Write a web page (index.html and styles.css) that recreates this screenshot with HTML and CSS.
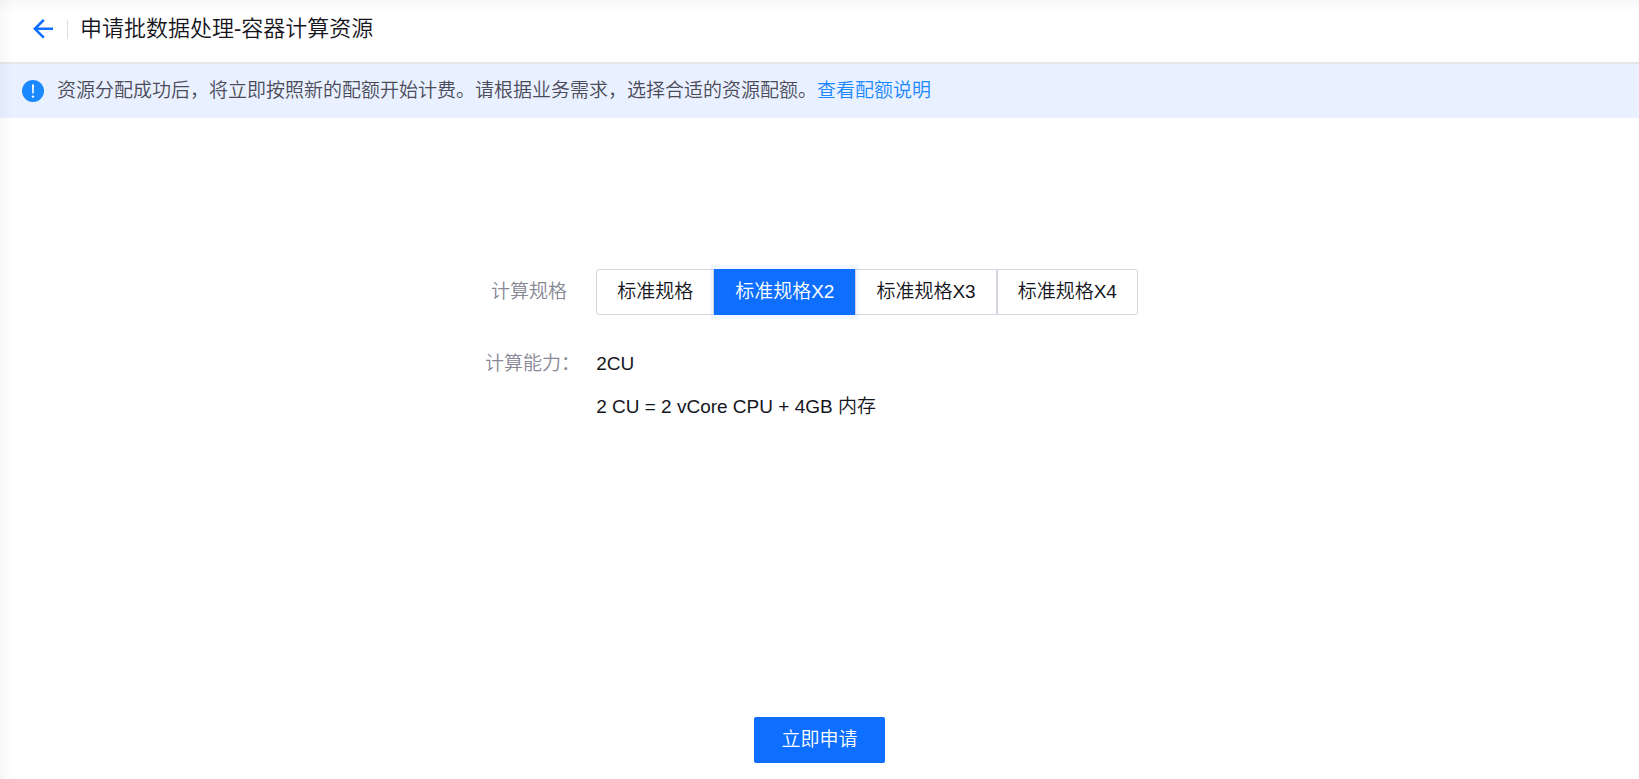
FILE: index.html
```html
<!DOCTYPE html>
<html lang="zh-CN">
<head>
<meta charset="utf-8">
<meta name="viewport" content="width=device-width, initial-scale=1">
<title>申请批数据处理-容器计算资源</title>
<link rel="stylesheet" href="styles.css">
</head>
<body>
<div class="page">
  <header class="header">
    <button class="back" type="button" aria-label="返回">
      <svg width="20" height="20" viewBox="0 0 20 20" fill="none" stroke="currentColor" stroke-width="2.6" aria-hidden="true"><path d="M10.8 .9 1.9 9.8l8.9 8.9M1.9 9.8H20"/></svg>
    </button>
    <span class="divider"></span>
    <h1 class="title">申请批数据处理-容器计算资源</h1>
  </header>
  <div class="notice">
    <svg class="notice-icon" width="22" height="22" viewBox="0 0 22 22" aria-hidden="true"><circle cx="11" cy="11" r="11" fill="#1a88ff"/><path d="M10 4.5h2l-.3 9h-1.4z" fill="#fff"/><circle cx="11" cy="16.6" r="1.2" fill="#fff"/></svg>
    <p class="notice-text">资源分配成功后，将立即按照新的配额开始计费。请根据业务需求，选择合适的资源配额。<a class="link" href="#">查看配额说明</a></p>
  </div>
  <form class="form">
    <div class="fields">
      <span class="label label-plain" id="spec-label">计算规格</span>
      <div class="segments" role="radiogroup" aria-labelledby="spec-label">
        <label class="segment"><input class="radio" type="radio" name="spec" value="1">标准规格</label>
        <label class="segment"><input class="radio" type="radio" name="spec" value="2" checked>标准规格X2</label>
        <label class="segment"><input class="radio" type="radio" name="spec" value="3">标准规格X3</label>
        <label class="segment"><input class="radio" type="radio" name="spec" value="4">标准规格X4</label>
      </div>
      <span class="label">计算能力：</span>
      <div class="capacity">
        <p class="value">2CU</p>
        <p class="value">2 CU = 2 vCore CPU + 4GB 内存</p>
      </div>
    </div>
    <button class="submit" type="submit">立即申请</button>
  </form>
</div>
</body>
</html>
```
FILE: styles.css
```css
* {
  box-sizing: border-box;
}

body {
  margin: 0;
  background: #fff;
  color: #15151c;
  font: 350 19px/28px "Liberation Sans", "Noto Sans CJK SC", sans-serif;
}

.page {
  display: flex;
  flex-direction: column;
  min-height: 100vh;
  position: relative;
}

.page::after {
  content: "";
  position: absolute;
  inset: 0;
  pointer-events: none;
  background:
    linear-gradient(to bottom, rgba(0, 0, 0, .03), transparent 12px),
    linear-gradient(to right, rgba(0, 0, 0, .03), transparent 12px);
}

.header {
  display: flex;
  align-items: center;
  height: 64px;
  padding: 0 33px 4px;
  border-bottom: 2px solid #e6e6e8;
}

.back {
  display: flex;
  padding: 0;
  border: 0;
  background: none;
  color: #0d6eff;
  cursor: pointer;
}

.divider {
  width: 1px;
  height: 19px;
  margin: 0 12px 0 14px;
  background: #dedee2;
}

.title {
  margin: 0;
  font-size: 22px;
  font-weight: 350;
  line-height: 32px;
}

.notice {
  display: flex;
  align-items: center;
  gap: 13px;
  padding: 13px 22px;
  background: #e9f0ff;
  color: #4b4b5a;
}

.notice-icon {
  flex: none;
}

.notice-text {
  margin: 0;
}

.link {
  color: #1a88ff;
  text-decoration: none;
}

.form {
  display: flex;
  flex: 1;
  flex-direction: column;
  align-items: center;
  justify-content: space-between;
  gap: 48px;
  padding: 151px 0 16px;
}

.fields {
  display: grid;
  grid-template-columns: auto auto;
  gap: 35px 16px;
  margin-right: 16px;
}

.label {
  color: #888896;
  text-align: right;
}

.label-plain {
  align-self: center;
  padding-right: 13px;
}

.segments {
  display: flex;
}

.segment {
  position: relative;
  padding: 8px 20px;
  border: 1px solid #d5d5e0;
  line-height: 28px;
  white-space: nowrap;
  cursor: pointer;
}

.segment:first-child {
  border-radius: 3px 0 0 3px;
}

.segment:last-child {
  border-radius: 0 3px 3px 0;
}

.segment:has(.radio:checked) {
  z-index: 1;
  border-color: #0d6eff;
  background: #0d6eff;
  box-shadow: 0 0 0 4px rgba(13, 110, 255, .06);
  color: #fff;
}

.radio {
  position: absolute;
  inset: 0;
  margin: 0;
  opacity: 0;
  cursor: pointer;
}

.capacity {
  display: grid;
  gap: 15px;
}

.value {
  margin: 0;
}

.submit {
  padding: 9px 27px;
  border: 0;
  border-radius: 2px;
  background: #0d6eff;
  color: #fff;
  font: inherit;
  cursor: pointer;
}
```
